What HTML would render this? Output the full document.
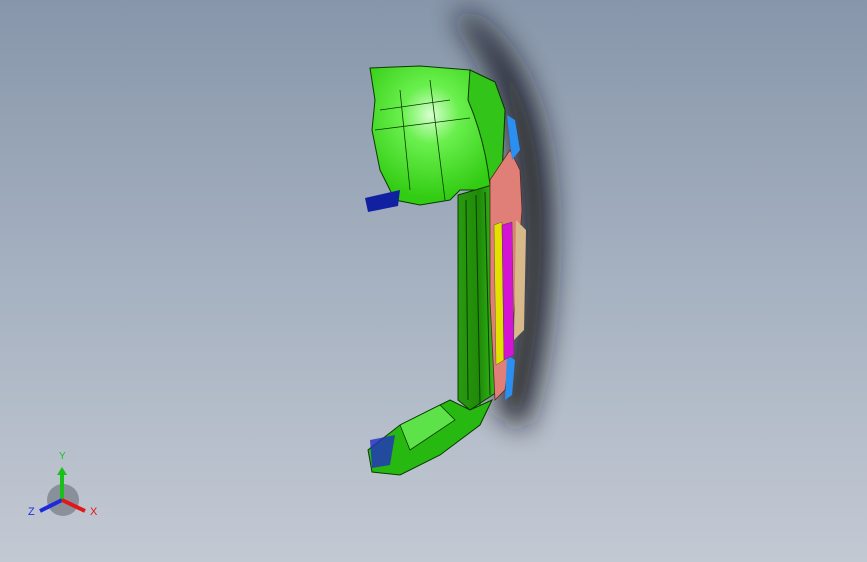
<!DOCTYPE html><html><head><style>
html,body{margin:0;padding:0}
body{width:867px;height:562px;overflow:hidden;background:linear-gradient(180deg,#8796aa 0%,#a3afbf 45%,#c3c9d3 100%);font-family:"Liberation Sans",sans-serif}
</style></head><body>
<svg width="867" height="562" viewBox="0 0 867 562" style="position:absolute;left:0;top:0">
<defs>
<filter id="b" x="-50%" y="-50%" width="200%" height="200%"><feGaussianBlur stdDeviation="14"/></filter>
<radialGradient id="g1" cx=".45" cy=".35" r=".6"><stop offset="0" stop-color="#d8ffd0"/><stop offset=".35" stop-color="#6af04e"/><stop offset="1" stop-color="#33cc14"/></radialGradient>
<linearGradient id="g2" x1="0" y1="0" x2="1" y2="0"><stop offset="0" stop-color="#2a9a10"/><stop offset=".5" stop-color="#1f8a08"/><stop offset="1" stop-color="#3cc820"/></linearGradient>
</defs>
<path d="M465 10 Q545 60 552 210 Q555 340 525 430 L495 410 Q525 300 515 190 Q505 70 455 20 Z" fill="#15171d" opacity=".9" filter="url(#b)"/>
<!-- top arm -->
<path d="M370 68 L420 66 L470 70 L495 82 L505 110 L502 175 L490 190 L460 190 L450 200 L420 205 L395 200 L380 170 L372 130 L375 100 Z" fill="url(#g1)" stroke="#0a3a00" stroke-width="1"/>
<path d="M470 70 L495 82 L505 110 L502 175 L490 185 Q485 140 468 100 Z" fill="#33c41a" stroke="#0a3a00" stroke-width="1"/>
<path d="M380 110 L450 100 M400 90 L410 190 M430 80 L445 200 M375 130 L470 118" stroke="#0a3a00" stroke-width=".8" fill="none"/>
<!-- vertical bar -->
<path d="M458 195 L492 185 L500 390 L470 410 L458 400 Z" fill="url(#g2)" stroke="#0a3a00" stroke-width="1"/>
<path d="M466 200 L468 400 M476 195 L480 405 M485 192 L490 395" stroke="#0b3d00" stroke-width="1"/>
<!-- side details -->
<path d="M490 180 L510 150 L520 170 L522 210 L512 340 L505 390 L495 400 L490 300 Z" fill="#e07f78" stroke="#5a2a20" stroke-width=".8"/>
<path d="M507 115 L515 120 L520 150 L512 160 Z" fill="#2a8ff0"/>
<path d="M507 355 L515 360 L512 395 L505 400 Z" fill="#2a8ff0"/>
<path d="M494 225 L502 222 L504 360 L496 365 Z" fill="#e6e000" stroke="#555" stroke-width=".5"/>
<path d="M502 225 L512 222 L514 355 L504 360 Z" fill="#d414d4" stroke="#444" stroke-width=".5"/>
<path d="M516 220 L526 230 L524 330 L514 340 Z" fill="#d8b98a"/>
<!-- bottom arm -->
<path d="M450 400 L470 410 L492 400 L480 425 L440 455 L400 475 L372 472 L368 450 L400 425 L440 405 Z" fill="#28b812" stroke="#0a3a00" stroke-width="1"/>
<path d="M400 425 L440 405 L455 420 L410 450 Z" fill="#5ee24a" stroke="#0a3a00" stroke-width=".8"/>
<path d="M370 440 L395 435 L390 465 L372 468 Z" fill="#2030c0" opacity=".8"/>
<path d="M365 198 L400 190 L398 206 L368 212 Z" fill="#1020a0"/>
<!-- triad -->
<circle cx="63" cy="500" r="16" fill="#5f6670" opacity=".55"/>
<path d="M62 500 L62 472" stroke="#19c019" stroke-width="4"/>
<path d="M57 475 L62 467 L67 475 Z" fill="#19c019"/>
<path d="M62 500 L40 511" stroke="#1b2bdc" stroke-width="4"/>
<path d="M62 500 L85 511" stroke="#e01818" stroke-width="4"/>
<text x="59" y="459" font-size="10" fill="#20c020">Y</text>
<text x="28" y="515" font-size="11" fill="#2030e0">Z</text>
<text x="90" y="515" font-size="11" fill="#e01818">X</text>
</svg>
</body></html>
